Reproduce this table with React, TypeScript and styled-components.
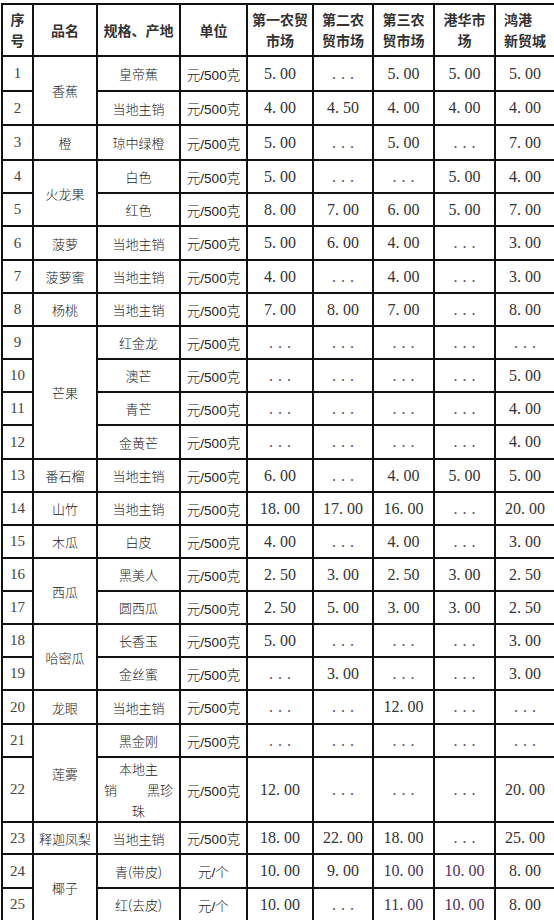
import React from "react";
import styled, { createGlobalStyle } from "styled-components";

const GlobalStyle = createGlobalStyle`
  html, body { margin: 0; padding: 0; background: #fff; }
  body { font-family: "Noto Sans CJK SC", sans-serif; color: #333; }
`;

const Page = styled.div`
  padding: 3px 0 0 1px;
`;

const Table = styled.table`
  width: 553px;
  table-layout: fixed;
  border-collapse: collapse;
  border: 2px solid #111;
`;

const HeadCell = styled.th<{ $left?: boolean }>`
  border: 2px solid #111;
  height: 50px;
  padding: 0;
  padding-left: ${(p) => (p.$left ? "8px" : "0")};
  text-align: ${(p) => (p.$left ? "left" : "center")};
  vertical-align: middle;
  font-family: "Noto Sans CJK SC", sans-serif;
  font-weight: 700;
  font-size: 14px;
  line-height: 21px;
  color: #333;
  white-space: nowrap;
`;

const Row = styled.tr<{ $h: number }>`
  height: ${(p) => p.$h}px;
`;

const BaseCell = styled.td`
  border: 2px solid #111;
  padding: 0;
  text-align: center;
  vertical-align: middle;
  white-space: nowrap;
`;

const NoCell = styled(BaseCell)`
  font-family: "Liberation Serif", serif;
  font-size: 15px;
  color: #444;
`;

const TextCell = styled(BaseCell)`
  font-family: "Noto Sans CJK SC", sans-serif;
  font-weight: 300;
  font-size: 13px;
  color: #222;
`;

const UnitCell = styled(BaseCell)`
  font-family: "Liberation Sans", "Noto Sans CJK SC", sans-serif;
  font-weight: 300;
  font-size: 13.5px;
  color: #222;
`;

const PriceCell = styled(BaseCell)<{ $tone?: boolean }>`
  font-family: "Liberation Serif", serif;
  font-size: 16px;
  color: ${(p) => (p.$tone ? "#4d2f62" : "#333")};
`;

const Dot = styled.span`
  display: inline-block;
  width: 0.5em;
  text-align: left;
`;

const Ellipsis = styled.span`
  letter-spacing: 5px;
  padding-left: 5px;
  color: #555;
`;

const SpecStack = styled.div`
  display: flex;
  flex-direction: column;
  line-height: 21px;
  padding: 0 6px;
`;

const SpecLine = styled.div<{ $spread?: boolean }>`
  display: flex;
  justify-content: ${(p) => (p.$spread ? "space-between" : "center")};
`;

interface RowData {
  no: number;
  h: number;
  name?: string;
  span?: number;
  spec: React.ReactNode;
  unit: string;
  prices: string[];
  tones?: number[];
}

const U = "元/500克";
const E = "...";

const rows: RowData[] = [
  { no: 1, h: 35, name: "香蕉", span: 2, spec: "皇帝蕉", unit: U, prices: ["5.00", E, "5.00", "5.00", "5.00"] },
  { no: 2, h: 34, spec: "当地主销", unit: U, prices: ["4.00", "4.50", "4.00", "4.00", "4.00"] },
  { no: 3, h: 35, name: "橙", spec: "琼中绿橙", unit: U, prices: ["5.00", E, "5.00", E, "7.00"] },
  { no: 4, h: 33, name: "火龙果", span: 2, spec: "白色", unit: U, prices: ["5.00", E, E, "5.00", "4.00"] },
  { no: 5, h: 33, spec: "红色", unit: U, prices: ["8.00", "7.00", "6.00", "5.00", "7.00"] },
  { no: 6, h: 34, name: "菠萝", spec: "当地主销", unit: U, prices: ["5.00", "6.00", "4.00", E, "3.00"] },
  { no: 7, h: 33, name: "菠萝蜜", spec: "当地主销", unit: U, prices: ["4.00", E, "4.00", E, "3.00"] },
  { no: 8, h: 33, name: "杨桃", spec: "当地主销", unit: U, prices: ["7.00", "8.00", "7.00", E, "8.00"] },
  { no: 9, h: 33, name: "芒果", span: 4, spec: "红金龙", unit: U, prices: [E, E, E, E, E] },
  { no: 10, h: 33, spec: "澳芒", unit: U, prices: [E, E, E, E, "5.00"] },
  { no: 11, h: 33, spec: "青芒", unit: U, prices: [E, E, E, E, "4.00"] },
  { no: 12, h: 34, spec: "金黄芒", unit: U, prices: [E, E, E, E, "4.00"] },
  { no: 13, h: 33, name: "番石榴", spec: "当地主销", unit: U, prices: ["6.00", E, "4.00", "5.00", "5.00"] },
  { no: 14, h: 33, name: "山竹", spec: "当地主销", unit: U, prices: ["18.00", "17.00", "16.00", E, "20.00"] },
  { no: 15, h: 33, name: "木瓜", spec: "白皮", unit: U, prices: ["4.00", E, "4.00", E, "3.00"] },
  { no: 16, h: 33, name: "西瓜", span: 2, spec: "黑美人", unit: U, prices: ["2.50", "3.00", "2.50", "3.00", "2.50"] },
  { no: 17, h: 33, spec: "圆西瓜", unit: U, prices: ["2.50", "5.00", "3.00", "3.00", "2.50"] },
  { no: 18, h: 33, name: "哈密瓜", span: 2, spec: "长香玉", unit: U, prices: ["5.00", E, E, E, "3.00"] },
  { no: 19, h: 33, spec: "金丝蜜", unit: U, prices: [E, "3.00", E, E, "3.00"] },
  { no: 20, h: 34, name: "龙眼", spec: "当地主销", unit: U, prices: [E, E, "12.00", E, E] },
  { no: 21, h: 33, name: "莲雾", span: 2, spec: "黑金刚", unit: U, prices: [E, E, E, E, E] },
  {
    no: 22,
    h: 63,
    spec: (
      <SpecStack>
        <SpecLine>本地主</SpecLine>
        <SpecLine $spread>
          <span>销</span>
          <span>黑珍</span>
        </SpecLine>
        <SpecLine>珠</SpecLine>
      </SpecStack>
    ),
    unit: U,
    prices: ["12.00", E, E, E, "20.00"],
  },
  { no: 23, h: 32, name: "释迦凤梨", spec: "当地主销", unit: U, prices: ["18.00", "22.00", "18.00", E, "25.00"] },
  { no: 24, h: 34, name: "椰子", span: 2, spec: "青(带皮)", unit: "元/个", prices: ["10.00", "9.00", "10.00", "10.00", "8.00"], tones: [2, 3] },
  { no: 25, h: 33, spec: "红(去皮)", unit: "元/个", prices: ["10.00", E, "11.00", "10.00", "8.00"], tones: [2, 3] },
];

const coveredNames = new Set<number>();
rows.forEach((r) => {
  if (r.span && r.span > 1) {
    for (let i = 1; i < r.span; i++) coveredNames.add(r.no + i);
  }
});

function PriceText({ value }: { value: string }) {
  if (value === E) return <Ellipsis>...</Ellipsis>;
  const [a, b] = value.split(".");
  return (
    <span>
      {a}
      <Dot>.</Dot>
      {b}
    </span>
  );
}

const widths = [31, 64, 83, 67, 66, 60, 61, 61, 60];

export default function App() {
  return (
    <>
      <GlobalStyle />
      <Page>
        <Table>
          <colgroup>
            {widths.map((w, i) => (
              <col key={i} style={{ width: w }} />
            ))}
          </colgroup>
          <thead>
            <tr>
              <HeadCell>
                序<br />号
              </HeadCell>
              <HeadCell>品名</HeadCell>
              <HeadCell>规格、产地</HeadCell>
              <HeadCell>单位</HeadCell>
              <HeadCell>
                第一农贸<br />市场
              </HeadCell>
              <HeadCell>
                第二农<br />贸市场
              </HeadCell>
              <HeadCell>
                第三农<br />贸市场
              </HeadCell>
              <HeadCell>
                港华市<br />场
              </HeadCell>
              <HeadCell $left>
                鸿港<br />新贸城
              </HeadCell>
            </tr>
          </thead>
          <tbody>
            {rows.map((r) => (
              <Row key={r.no} $h={r.h}>
                <NoCell>{r.no}</NoCell>
                {!coveredNames.has(r.no) && (
                  <TextCell rowSpan={r.span || 1}>{r.name}</TextCell>
                )}
                <TextCell>{r.spec}</TextCell>
                <UnitCell>{r.unit}</UnitCell>
                {r.prices.map((p, i) => (
                  <PriceCell key={i} $tone={r.tones?.includes(i)}>
                    <PriceText value={p} />
                  </PriceCell>
                ))}
              </Row>
            ))}
          </tbody>
        </Table>
      </Page>
    </>
  );
}
